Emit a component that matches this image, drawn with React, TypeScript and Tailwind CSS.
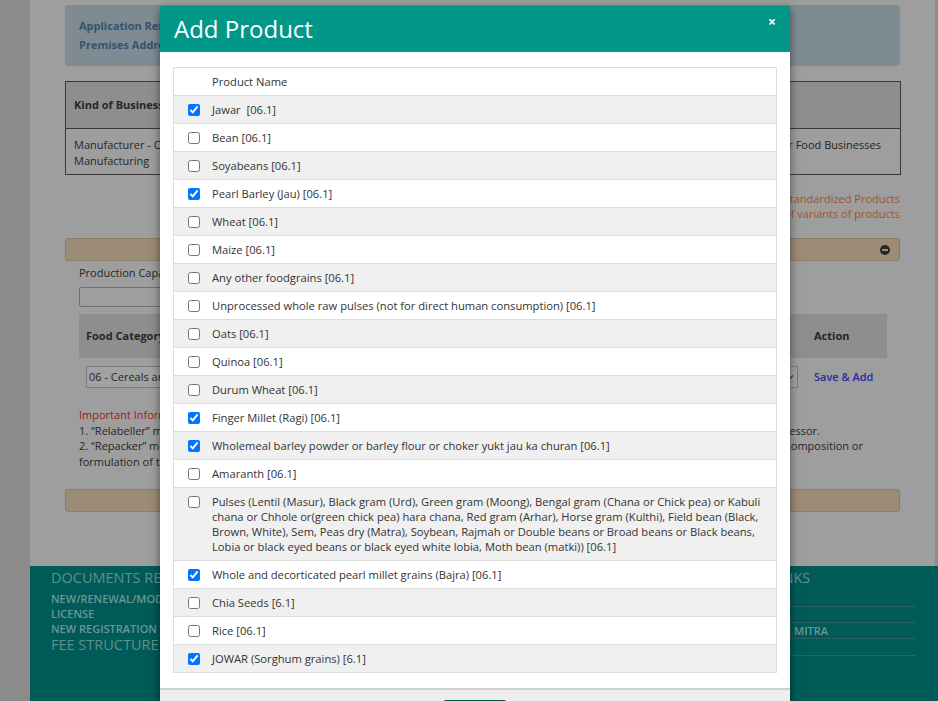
import React from 'react';

const products: [string, boolean][] = [
  ['Jawar\u00a0 [06.1]', true],
  ['Bean [06.1]', false],
  ['Soyabeans [06.1]', false],
  ['Pearl Barley (Jau) [06.1]', true],
  ['Wheat [06.1]', false],
  ['Maize [06.1]', false],
  ['Any other foodgrains [06.1]', false],
  ['Unprocessed whole raw pulses (not for direct human consumption) [06.1]', false],
  ['Oats [06.1]', false],
  ['Quinoa [06.1]', false],
  ['Durum Wheat [06.1]', false],
  ['Finger Millet (Ragi) [06.1]', true],
  ['Wholemeal barley powder or barley flour or choker yukt jau ka churan [06.1]', true],
  ['Amaranth [06.1]', false],
  [
    'Pulses (Lentil (Masur), Black gram (Urd), Green gram (Moong), Bengal gram (Chana or Chick pea) or Kabuli chana or Chhole or(green chick pea) hara chana, Red gram (Arhar), Horse gram (Kulthi), Field bean (Black, Brown, White), Sem, Peas dry (Matra), Soybean, Rajmah or Double beans or Broad beans or Black beans, Lobia or black eyed beans or black eyed white lobia, Moth bean (matki)) [06.1]',
    false,
  ],
  ['Whole and decorticated pearl millet grains (Bajra) [06.1]', true],
  ['Chia Seeds [6.1]', false],
  ['Rice [06.1]', false],
  ['JOWAR (Sorghum grains) [6.1]', true],
];

function Background() {
  return (
    <div className="ml-[30px] flex h-full w-[908px] flex-col">
      {/* page body (dimmed by backdrop) */}
      <main className="h-[566px] w-[905px] bg-[#9e9e9e] px-[35px] pt-[5px] text-[#262626]">
        {/* info box */}
        <div className="h-[61px] rounded-[4px] bg-[#7f8b93] px-[14px] pt-[11px] text-[11px] font-bold leading-[19px] text-[#34536f]">
          <div>Application Reference No. : 10250417100212345</div>
          <div>Premises Address : Plot No. 12, Industrial Area, Lucknow</div>
        </div>

        {/* kind of business table */}
        <div className="mt-[15px] w-[836px] border border-[#3a3a3a]">
          <div className="grid h-[47px] grid-cols-[335px_322px_1fr] items-center border-b border-[#3a3a3a] bg-[#8e8e8e] font-bold">
            <div className="pl-[8px]">Kind of Business</div>
            <div className="pl-[8px]">Category</div>
            <div />
          </div>
          <div className="grid h-[45px] grid-cols-[335px_322px_1fr] pt-[8px] leading-[15.5px]">
            <div className="pl-[8px]">
              <div>Manufacturer - Cereal Processing</div>
              <div>Manufacturing</div>
            </div>
            <div className="pl-[8px]">General Manufacturing</div>
            <div className="pl-[14px]">Licence for Food Businesses</div>
          </div>
        </div>

        <div className="mt-[16px] text-right leading-[15px] text-[#9e5526]">
          <div>* Please select the food category for Standardized Products</div>
          <div>* You can add any number of variants of products</div>
        </div>

        {/* collapsible bar */}
        <div className="mt-[17px] flex h-[23px] items-center justify-end rounded-[3px] border border-[#8c7b68] bg-[#9c8b77] pr-[9px]">
          <span className="flex h-[10px] w-[10px] items-center justify-center rounded-full bg-[#262626]">
            <span className="h-[2px] w-[6px] bg-[#9c8b77]" />
          </span>
        </div>

        <div className="pl-[14px]">
          <div className="mt-[4px] leading-[16px]">Production Capacity (in MT/annum)</div>
          <div className="mt-[6px] h-[20px] w-[300px] rounded-[2px] border border-[#707070]" />

          <div className="mt-[7px] flex h-[44px] w-[808px] items-center bg-[#8e8e8e] font-bold">
            <div className="flex-1 pl-[7px]">Food Category</div>
            <div className="w-[82px] pl-[9px]">Action</div>
          </div>

          <div className="mt-[8px] flex h-[22px] w-[808px] items-center">
            <div className="ml-[7px] flex h-[22px] w-[712px] items-center justify-between border border-[#7c7c7c] bg-[#a2a2a2] pl-[2px] pr-[3px]">
              <span>06 - Cereals and cereal products</span>
              <svg width="8" height="8" viewBox="0 0 8 8" className="text-[#3a3a3a]">
                <path d="M1 2.5 L4 5.5 L7 2.5" fill="none" stroke="currentColor" strokeWidth="1.2" />
              </svg>
            </div>
            <a className="ml-[16px] font-semibold text-[#2a2aa2]">Save &amp; Add</a>
          </div>

          <div className="mt-[19px] leading-[15.7px]">
            <div className="text-[#a01818]">Important Information :</div>
            <div className="flex w-[741px] justify-between">
              <span>1. “Relabeller” means a food business operator who labels the packaged product</span>
              <span>of the original manufacturer or processor.</span>
            </div>
            <div className="flex w-[784px] justify-between">
              <span>2. “Repacker” means a food business operator who packs the product</span>
              <span>without any change in composition or</span>
            </div>
            <div>formulation of the product.</div>
          </div>
        </div>

        <div className="mt-[19px] h-[23px] rounded-[3px] border border-[#8c7b68] bg-[#9c8b77]" />
      </main>

      {/* footer */}
      <footer className="flex flex-1 bg-[#005a57] pl-[21px] pt-[3px]">
        <div className="w-[600px] text-[#6a9795]">
          <div className="text-[14.5px] leading-[18px] text-[#5f918f]">DOCUMENTS REQUIRED</div>
          <div className="mt-[4px] text-[11px] font-semibold leading-[15px]">
            <div>NEW/RENEWAL/MODIFICATION OF</div>
            <div>LICENSE</div>
            <div>NEW REGISTRATION</div>
          </div>
          <div className="text-[14.5px] leading-[18px] text-[#5f918f]">FEE STRUCTURE</div>
        </div>
        <div className="ml-[34px] w-[230px]">
          <div className="text-[14.5px] leading-[18px] text-[#5f918f]">IMPORTANT LINKS</div>
          <div className="mt-[4px] text-[11px] font-semibold leading-[15px] text-[#6a9795]">
            <div className="h-[16px] border-b border-dotted border-[#3f7472]">FSSAI</div>
            <div className="h-[16px] border-b border-dotted border-[#3f7472]">FoSCoS</div>
            <div className="h-[16px] border-b border-dotted border-[#3f7472] pr-[87px] text-right">NIVESH MITRA</div>
            <div className="h-[17px] border-b border-dotted border-[#3f7472]">FAQ</div>
          </div>
        </div>
      </footer>
    </div>
  );
}

function AddProductModal() {
  return (
    <div className="absolute left-[160px] top-[6px] w-[630px] bg-white shadow-[0_3px_9px_rgba(0,0,0,0.5)]">
      <div className="flex h-[46px] items-start justify-between bg-[#009688] pl-[14px] pr-[14px]">
        <h4 className="pt-[7px] text-[24px] leading-[32px] text-white">Add Product</h4>
        <button className="mt-[8px] text-[14px] font-bold leading-[16px] text-white">×</button>
      </div>

      <div className="px-[13px] pb-[15px] pt-[15px]">
        <div className="w-[604px] border border-[#dddddd] text-[11.2px] text-[#333333]">
          <div className="flex py-[6px] pl-[38px] leading-[15px]">Product Name</div>
          {products.map(([name, checked], i) => (
            <div
              key={name}
              className={
                i % 2 === 0
                  ? 'flex items-start gap-[12px] border-t border-[#dddddd] bg-[#f0f0f0] py-[6px] pl-[14px] pr-[8px]'
                  : 'flex items-start gap-[12px] border-t border-[#dddddd] bg-white py-[6px] pl-[14px] pr-[8px]'
              }
            >
              <input
                type="checkbox"
                defaultChecked={checked}
                className="m-0 mt-[1.5px] h-[12px] w-[12px] shrink-0"
              />
              <span className="leading-[15px]">{name}</span>
            </div>
          ))}
        </div>
      </div>

      <div className="h-[40px] border-t-2 border-[#cfcfcf] bg-[#eeeeee] pt-[10px]">
        <button className="mx-auto block h-[28px] w-[64px] rounded-[3px] border border-[#0a4d47] bg-[#0d5e57] text-[12px] text-white">
          Submit
        </button>
      </div>
    </div>
  );
}

export default function App() {
  return (
    <div className="relative h-[701px] w-[938px] overflow-hidden bg-[#8b8b8b] font-['Open_Sans','Noto_Sans',sans-serif] text-[11px]">
      <Background />
      <AddProductModal />
    </div>
  );
}
